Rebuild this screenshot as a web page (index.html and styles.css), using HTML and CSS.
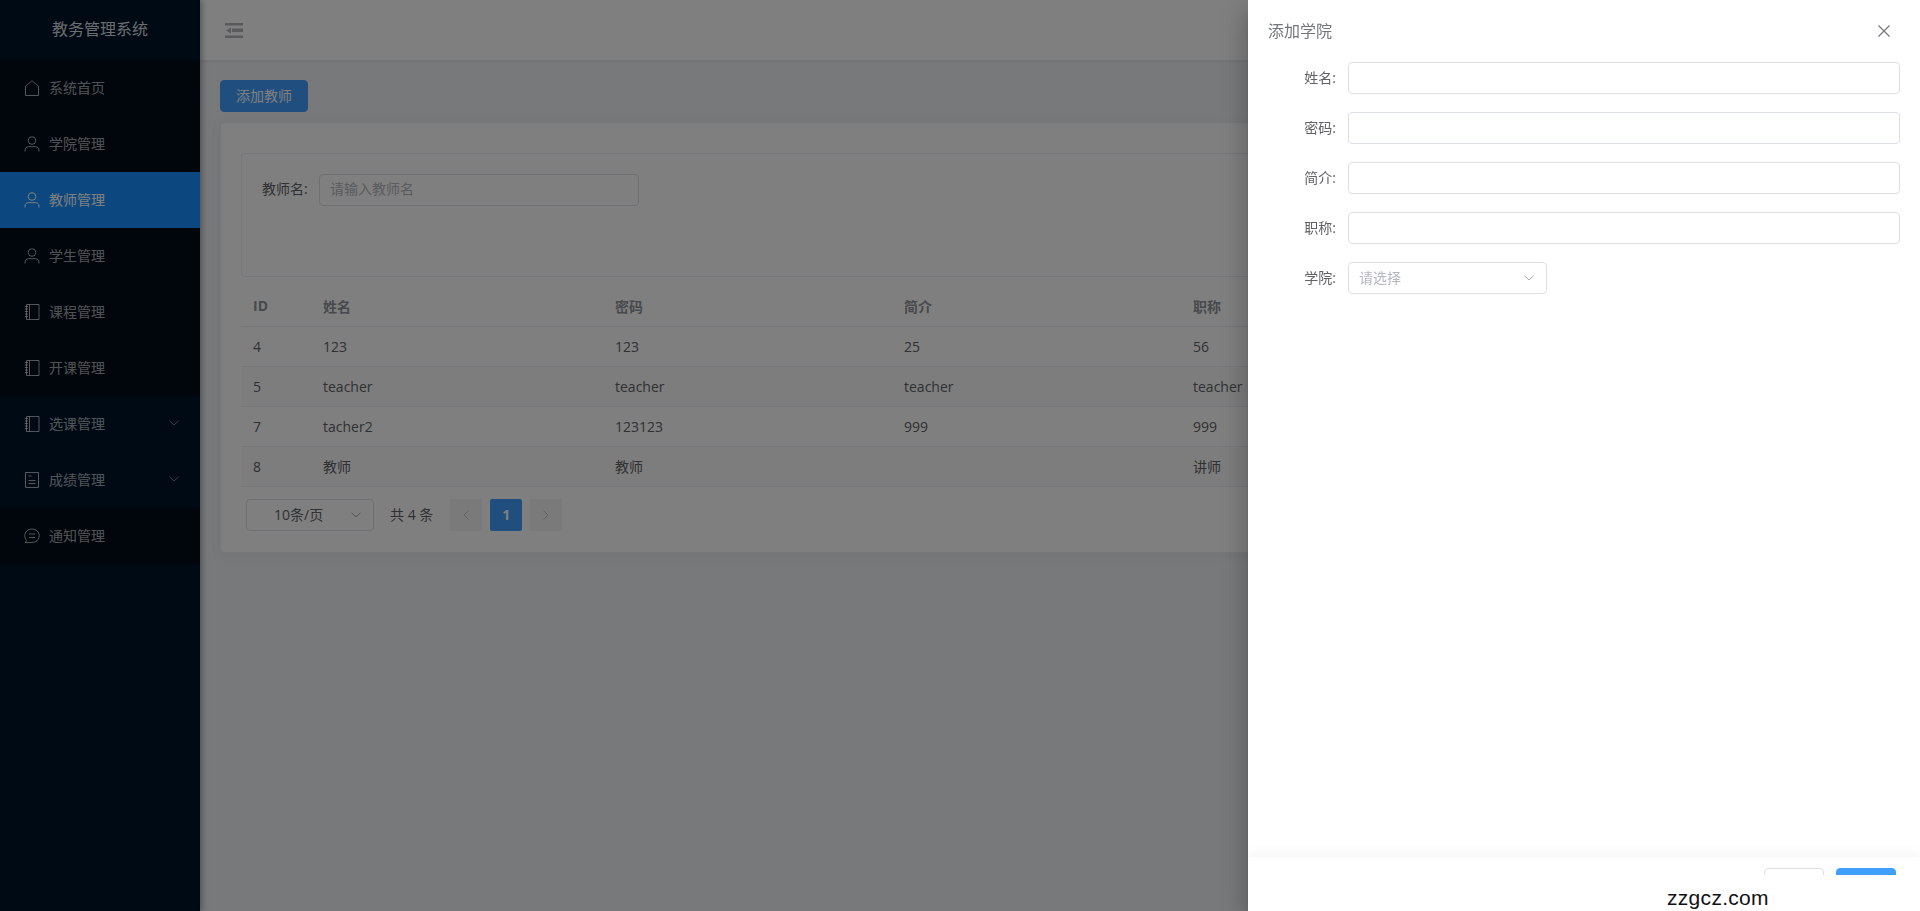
FILE: index.html
```html
<!DOCTYPE html>
<html lang="zh">
<head>
<meta charset="utf-8">
<title>教务管理系统</title>
<link rel="stylesheet" href="styles.css">
</head>
<body>
<div class="app">
  <aside class="aside">
    <div class="logo">教务管理系统</div>
    <ul class="menu">
      <li class="item"><svg class="ico" viewBox="0 0 16 16"><path d="M1.500 15.500V6.200L8 .7l6.500 5.500v9.300z"/></svg><span>系统首页</span></li>
      <li class="item"><svg class="ico" viewBox="0 0 16 16"><circle cx="8" cy="4.500" r="3.800"/><path d="M1 15.500v-1.500c0-2 1.500-3.300 3.500-3.300h7c2 0 3.500 1.300 3.500 3.300v1.500"/></svg><span>学院管理</span></li>
      <li class="item active"><svg class="ico" viewBox="0 0 16 16"><circle cx="8" cy="4.500" r="3.800"/><path d="M1 15.500v-1.500c0-2 1.500-3.300 3.500-3.300h7c2 0 3.500 1.300 3.500 3.300v1.500"/></svg><span>教师管理</span></li>
      <li class="item"><svg class="ico" viewBox="0 0 16 16"><circle cx="8" cy="4.500" r="3.800"/><path d="M1 15.500v-1.500c0-2 1.500-3.300 3.500-3.300h7c2 0 3.500 1.300 3.500 3.300v1.500"/></svg><span>学生管理</span></li>
      <li class="item"><svg class="ico" viewBox="0 0 16 16"><path d="M2.500.5h12.500v15H2.500zM5.500.5v15M.8 2.500h3M.8 5h3M.8 7.500h3M.8 10h3M.8 12.500h3"/></svg><span>课程管理</span></li>
      <li class="item"><svg class="ico" viewBox="0 0 16 16"><path d="M2.500.5h12.500v15H2.500zM5.500.5v15M.8 2.500h3M.8 5h3M.8 7.500h3M.8 10h3M.8 12.500h3"/></svg><span>开课管理</span></li>
      <li class="item sub"><svg class="ico" viewBox="0 0 16 16"><path d="M2.500.5h12.500v15H2.500zM5.500.5v15M.8 2.500h3M.8 5h3M.8 7.500h3M.8 10h3M.8 12.500h3"/></svg><span>选课管理</span><svg class="arrow" viewBox="0 0 10 6"><path d="M.5.8 5 5 9.500.8"/></svg></li>
      <li class="item sub"><svg class="ico" viewBox="0 0 16 16"><path d="M1.500.5h13v15h-13zM4.500 4h3M4.500 8.500h7M4.500 11.500h7"/></svg><span>成绩管理</span><svg class="arrow" viewBox="0 0 10 6"><path d="M.5.8 5 5 9.500.8"/></svg></li>
      <li class="item"><svg class="ico" viewBox="0 0 16 16"><path d="M8 1c4 0 7.200 2.900 7.200 6.800S12 14.500 8 14.500H1.300l1.300-2C1.400 11.200.8 9.600.8 7.800.8 3.900 4 1 8 1zM5 6h6M5 9.500h6"/></svg><span>通知管理</span></li>
    </ul>
  </aside>
  <div class="main">
    <header class="header">
      <svg class="fold" viewBox="0 0 18 15"><path d="M0 0h18v2.500H0zM7 5.500h11v3.500H7zM0 12.500h18V15H0zM6 4.500v6L1 7.500z"/></svg>
    </header>
    <section class="content">
      <button class="btn primary add">添加教师</button>
      <div class="card">
        <div class="search">
          <label class="search-label">教师名:</label>
          <div class="input search-input placeholder">请输入教师名</div>
        </div>
        <table class="table">
          <colgroup><col class="c-id"><col class="c-name"><col class="c-pwd"><col class="c-intro"><col class="c-title"><col></colgroup>
          <thead>
            <tr><th>ID</th><th>姓名</th><th>密码</th><th>简介</th><th>职称</th><th>学院</th></tr>
          </thead>
          <tbody>
            <tr><td>4</td><td>123</td><td>123</td><td>25</td><td>56</td><td></td></tr>
            <tr class="stripe"><td>5</td><td>teacher</td><td>teacher</td><td>teacher</td><td>teacher</td><td></td></tr>
            <tr><td>7</td><td>tacher2</td><td>123123</td><td>999</td><td>999</td><td></td></tr>
            <tr class="stripe"><td>8</td><td>教师</td><td>教师</td><td></td><td>讲师</td><td></td></tr>
          </tbody>
        </table>
        <div class="pager">
          <div class="input page-size"><span>10条/页</span><svg class="arrow caret" viewBox="0 0 10 6"><path d="M.5.8 5 5 9.500.8"/></svg></div>
          <span class="total">共 4 条</span>
          <span class="page-btn"><svg class="chev" viewBox="0 0 6 10"><path d="M5.500.5 1 5l4.500 4.500"/></svg></span>
          <span class="page-btn current">1</span>
          <span class="page-btn"><svg class="chev" viewBox="0 0 6 10"><path d="M.5.5 5 5 .5 9.500"/></svg></span>
        </div>
      </div>
    </section>
  </div>
</div>
<div class="mask"></div>
<div class="drawer">
  <div class="drawer-head">
    <span class="drawer-title">添加学院</span>
    <svg class="close" viewBox="0 0 12 12"><path d="M.5.5l11 11M11.500.5l-11 11"/></svg>
  </div>
  <form class="form">
    <div class="field"><label class="field-label">姓名:</label><div class="input grow"></div></div>
    <div class="field"><label class="field-label">密码:</label><div class="input grow"></div></div>
    <div class="field"><label class="field-label">简介:</label><div class="input grow"></div></div>
    <div class="field"><label class="field-label">职称:</label><div class="input grow"></div></div>
    <div class="field"><label class="field-label">学院:</label><div class="input college"><span class="ph">请选择</span><svg class="arrow caret" viewBox="0 0 10 6"><path d="M.5.8 5 5 9.500.8"/></svg></div></div>
  </form>
  <div class="drawer-foot">
    <button class="btn plain">取消</button>
    <button class="btn solid">确定</button>
  </div>
  <div class="watermark">zzgcz.com</div>
</div>
</body>
</html>
```

FILE: styles.css
```css
* { box-sizing: border-box; }
html, body { margin: 0; height: 100%; overflow: hidden; }
body {
  font-family: "Open Sans", "Noto Sans CJK SC", sans-serif;
  font-size: 14px;
  color: #606266;
  background: #f0f2f5;
}
ul { list-style: none; margin: 0; padding: 0; }

.app { display: flex; height: 911px; }

.aside {
  width: 200px;
  flex: none;
  background: #001529;
  box-shadow: 2px 0 6px rgba(0, 21, 41, .35);
  position: relative;
  z-index: 2;
  color: rgba(255, 255, 255, .65);
}
.logo {
  height: 60px;
  line-height: 58px;
  text-align: center;
  font-size: 16px;
  color: rgba(255, 255, 255, .85);
  background: #001529;
}
.item {
  height: 56px;
  display: flex;
  align-items: center;
  padding-left: 24px;
  background: #000c17;
}
.item span { margin-top: -2px; }
.item.sub { background: #001529; position: relative; }
.item.active { background: #1890ff; color: #fff; }
.ico {
  width: 16px;
  height: 16px;
  margin-right: 9px;
  fill: none;
  stroke: currentColor;
  stroke-width: 1;
  flex: none;
}
.arrow {
  width: 10px;
  height: 6px;
  fill: none;
  stroke: currentColor;
  stroke-width: 1;
}
.item .arrow { margin-left: auto; margin-right: 21px; margin-top: -3px; color: rgba(255, 255, 255, .45); }

.main { flex: 1; min-width: 0; display: flex; flex-direction: column; }
.header {
  height: 60px;
  background: #fff;
  display: flex;
  align-items: center;
  padding-left: 25px;
  box-shadow: 0 1px 4px rgba(0, 21, 41, .08);
  position: relative;
}
.fold { width: 18px; height: 15px; fill: #b4b5b9; }

.content { padding: 20px 20px 0; }
.btn {
  font: inherit;
  height: 32px;
  border-radius: 4px;
  cursor: pointer;
}
.add {
  display: block;
  width: 88px;
  padding: 0 0 2px;
  background: #409eff;
  border: 1px solid #409eff;
  color: #fff;
}
.card {
  margin-top: 10px;
  background: #fff;
  border: 1px solid #ebeef5;
  border-radius: 4px;
  padding: 30px 20px 0;
  height: 431px;
  box-shadow: 0 2px 12px rgba(0, 0, 0, .05);
}
.search {
  height: 124px;
  border: 1px solid #ebeef5;
  border-radius: 4px;
  padding: 20px;
  display: flex;
  align-items: flex-start;
}
.search-label { line-height: 30px; width: 57px; flex: none; color: #606266; }
.input {
  height: 32px;
  background: #fff;
  border: 1px solid #dcdfe6;
  border-radius: 4px;
  line-height: 28px;
}
.search-input { width: 320px; padding-left: 10px; }
.placeholder, .ph { color: #b4b7be; }

.table {
  width: 100%;
  margin-top: 9px;
  border-collapse: collapse;
  table-layout: fixed;
}
.c-id { width: 70px; }
.c-name { width: 292px; }
.c-pwd, .c-intro, .c-title { width: 289px; }
.table th, .table td {
  height: 40px;
  padding: 0 12px;
  text-align: left;
  border-bottom: 1px solid #ebeef5;
  font-size: 14px;
  white-space: nowrap;
}
.table th { color: #909399; font-weight: 700; }
.stripe td { background: #fafafa; }

.pager { display: flex; align-items: center; margin-top: 12px; padding-left: 5px; }
.page-size {
  width: 128px;
  display: flex;
  align-items: center;
  padding-left: 27px;
  margin-right: 16px;
}
.caret { margin-left: auto; margin-right: 12px; color: #a8abb2; }
.total { margin-right: 17px; margin-top: -2px; }
.page-btn {
  width: 32px;
  height: 32px;
  border-radius: 2px;
  background: #f4f4f5;
  color: #c0c4cc;
  margin-right: 8px;
  display: flex;
  align-items: center;
  justify-content: center;
  font-weight: 700;
}
.page-btn.current { background: #409eff; color: #fff; }
.chev { width: 6px; height: 10px; fill: none; stroke: currentColor; stroke-width: 1; }

.mask {
  position: fixed;
  inset: 0;
  background: rgba(0, 0, 0, .5);
  z-index: 10;
}
.drawer {
  position: fixed;
  top: 0;
  right: 0;
  bottom: 0;
  width: 672px;
  background: #fff;
  z-index: 11;
  display: flex;
  flex-direction: column;
  box-shadow: 0 8px 10px -5px rgba(0, 0, 0, .2), 0 16px 24px 2px rgba(0, 0, 0, .14), 0 6px 30px 5px rgba(0, 0, 0, .12);
}
.drawer-head {
  height: 62px;
  flex: none;
  display: flex;
  justify-content: space-between;
  align-items: center;
  padding: 0 30px 0 20px;
}
.drawer-title { font-size: 16px; color: #72767b; line-height: 1; }
.close { width: 12px; height: 12px; fill: none; stroke: #72767b; stroke-width: 1.200; margin-top: -1px; }
.form { flex: 1; padding: 0 20px; display: flex; flex-direction: column; gap: 18px; }
.field { display: flex; align-items: center; }
.field-label { width: 80px; flex: none; text-align: right; padding: 0 12px 2px 0; color: #606266; }
.grow { flex: 1; }
.college { width: 199px; display: flex; align-items: center; padding-left: 10px; }
.drawer-foot {
  height: 54px;
  flex: none;
  display: flex;
  justify-content: flex-end;
  gap: 12px;
  padding: 11px 24px 0 0;
  box-shadow: 0 -6px 10px rgba(0, 0, 0, .03);
  position: relative;
}
.plain { width: 60px; padding: 0; background: #fff; border: 1px solid #dcdfe6; color: #606266; }
.solid { width: 60px; padding: 0; background: #409eff; border: 1px solid #409eff; color: #fff; }
.watermark {
  position: absolute;
  left: 0;
  right: 0;
  bottom: 0;
  height: 36px;
  background: #fff;
  padding: 10px 0 0 419px;
  font-family: "Liberation Sans", sans-serif;
  font-size: 21px;
  line-height: 26px;
  letter-spacing: .3px;
  color: #111;
}
```
